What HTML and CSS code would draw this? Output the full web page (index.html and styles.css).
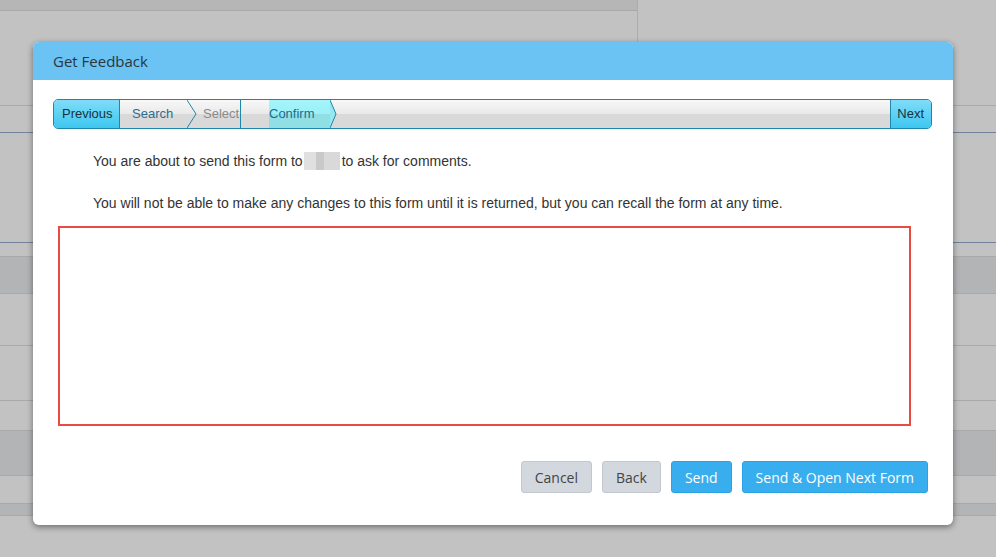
FILE: index.html
```html
<!DOCTYPE html>
<html lang="en">
<head>
    <meta charset="UTF-8" />
    <title>Get Feedback</title>
    <link rel="stylesheet" href="styles.css">
</head>
<body>
    <div class="backdrop">
        <div class="bg-top">
            <div class="bg-top-left"></div>
            <div class="bg-top-right"></div>
        </div>
        <div class="bg-row" style="height: 94px"></div>
        <div class="bg-row blue" style="height: 26px"></div>
        <div class="bg-row blue" style="height: 109px"></div>
        <div class="bg-row" style="height: 13px"></div>
        <div class="bg-row dark" style="height: 36px"></div>
        <div class="bg-row" style="height: 51px"></div>
        <div class="bg-row" style="height: 54px"></div>
        <div class="bg-row" style="height: 29px"></div>
        <div class="bg-row dark" style="height: 44px"></div>
        <div class="bg-row" style="height: 27px"></div>
        <div class="bg-row dark" style="height: 11px"></div>
    </div>

    <div class="modal">
        <div class="modal-header">Get Feedback</div>
        <div class="modal-body">
            <div class="steps">
                <div class="step-btn prev">Previous</div>
                <div class="step search">Search</div>
                <svg class="chevron" width="10" height="28" viewBox="0 0 10 28">
                    <polyline points="0,0 9,14 0,28" fill="none" stroke="#1f87a8" stroke-width="1" />
                </svg>
                <div class="step select">Select</div>
                <div class="step-gap"></div>
                <div class="step current">Confirm</div>
                <svg class="chevron" width="7" height="28" viewBox="0 0 7 28">
                    <polygon points="0,0 6,14 0,28" fill="#95e8ee" />
                    <polyline points="0,0 6,14 0,28" fill="none" stroke="#1f87a8" stroke-width="1" />
                </svg>
                <div class="step-fill"></div>
                <div class="step-btn next">Next</div>
            </div>

            <p class="msg">You are about to send this form to<span class="blurred"></span>to ask for comments.</p>
            <p class="msg">You will not be able to make any changes to this form until it is returned, but you can recall the form at any time.</p>

            <div class="highlight-box"></div>
        </div>
        <div class="modal-footer">
            <button class="btn btn-grey">Cancel</button>
            <button class="btn btn-grey">Back</button>
            <button class="btn btn-blue">Send</button>
            <button class="btn btn-blue">Send &amp; Open Next Form</button>
        </div>
    </div>
</body>
</html>
```

FILE: styles.css
```css
html, body {
    margin: 0;
    padding: 0;
}

body {
    width: 996px;
    height: 557px;
    overflow: hidden;
    background: #c2c2c2;
    font-family: Arial, "Liberation Sans", sans-serif;
    position: relative;
}

/* page behind the overlay */
.backdrop {
    display: flex;
    flex-direction: column;
}

.bg-top {
    display: flex;
    height: 11px;
}

.bg-top-left {
    width: 637px;
    height: 10px;
    background: #b6b6b6;
    border-bottom: 1px solid #a9a9a9;
}

.bg-top-right {
    flex: 1;
    height: 60px;
    border-left: 1px solid #adadad;
}

.bg-row {
    border-bottom: 1px solid #a9a9a9;
}

.bg-row.blue {
    border-bottom-color: #73829a;
}

.bg-row.dark {
    background: #b3b4b6;
}

/* dialog */
.modal {
    position: absolute;
    left: 33px;
    top: 42px;
    width: 920px;
    height: 483px;
    background: white;
    border-radius: 6px;
    box-shadow: 0 2px 6px rgba(0,0,0,0.45);
    display: flex;
    flex-direction: column;
    overflow: hidden;
}

.modal-header {
    height: 38px;
    line-height: 38px;
    padding-left: 20px;
    background: #6ac3f2;
    color: #2b3640;
    font-family: "Open Sans", sans-serif;
    font-size: 15px;
}

.modal-body {
    flex: 1;
    padding: 19px 21px 0 20px;
}

.steps {
    display: flex;
    height: 28px;
    border: 1px solid #1f87a8;
    border-radius: 5px;
    overflow: hidden;
    background: linear-gradient(#f8f8f8, #e9e9e9 50%, #d9d9d9 50%, #d9d9d9);
    font-size: 13px;
    line-height: 28px;
}

.step-btn {
    background: linear-gradient(#80dcf9, #3dc7ef);
    color: #17323f;
    padding: 0 7px 0 8px;
}

.step-btn.prev {
    width: 50px;
    border-right: 1px solid #1f87a8;
}

.step-btn.next {
    border-left: 1px solid #1f87a8;
    padding: 0 7px 0 6px;
}

.step {
    white-space: nowrap;
    overflow: hidden;
}

.step.search {
    width: 55px;
    padding-left: 12px;
    color: #2a6d8f;
}

.chevron {
    flex: none;
    display: block;
}

.step.select {
    width: 37px;
    padding-left: 6px;
    color: #8a8a8a;
    border-right: 1px solid #1f87a8;
}

.step-gap {
    width: 28px;
}

.step.current {
    width: 61px;
    color: #216b8d;
    background: linear-gradient(#a4f4fb, #9cf0f7 50%, #8fdfe5 50%, #8fdfe5);
}

.step-fill {
    flex: 1;
}

.msg {
    margin: 0 0 25px 40px;
    font-size: 14px;
    line-height: 16px;
    color: #333;
}

.modal-body .steps + .msg {
    margin-top: 23px;
}

.blurred {
    display: inline-block;
    width: 36px;
    height: 18px;
    margin: 0 2px 0 1px;
    vertical-align: -4px;
    background:
        linear-gradient(90deg, #e0e0e0 0 33%, #c9c9c9 33% 55%, #d9d9d9 55% 100%);
}

.highlight-box {
    margin: -10px 21px 0 5px;
    height: 196px;
    border: 2px solid #ea4b41;
}

.modal-footer {
    display: flex;
    justify-content: flex-end;
    gap: 10px;
    padding: 0 25px 32px 0;
}

.btn {
    height: 32px;
    padding: 0 13px;
    font-family: "Open Sans", sans-serif;
    font-size: 14px;
    border-radius: 3px;
    cursor: pointer;
}

.btn-grey {
    background: #d2d8de;
    border: 1px solid #c2c8ce;
    color: #444;
}

.btn-blue {
    background: #39aeee;
    border: 1px solid #2aa3e6;
    color: white;
}

.btn-blue:hover {
    background: #2a9fe0;
}
```
